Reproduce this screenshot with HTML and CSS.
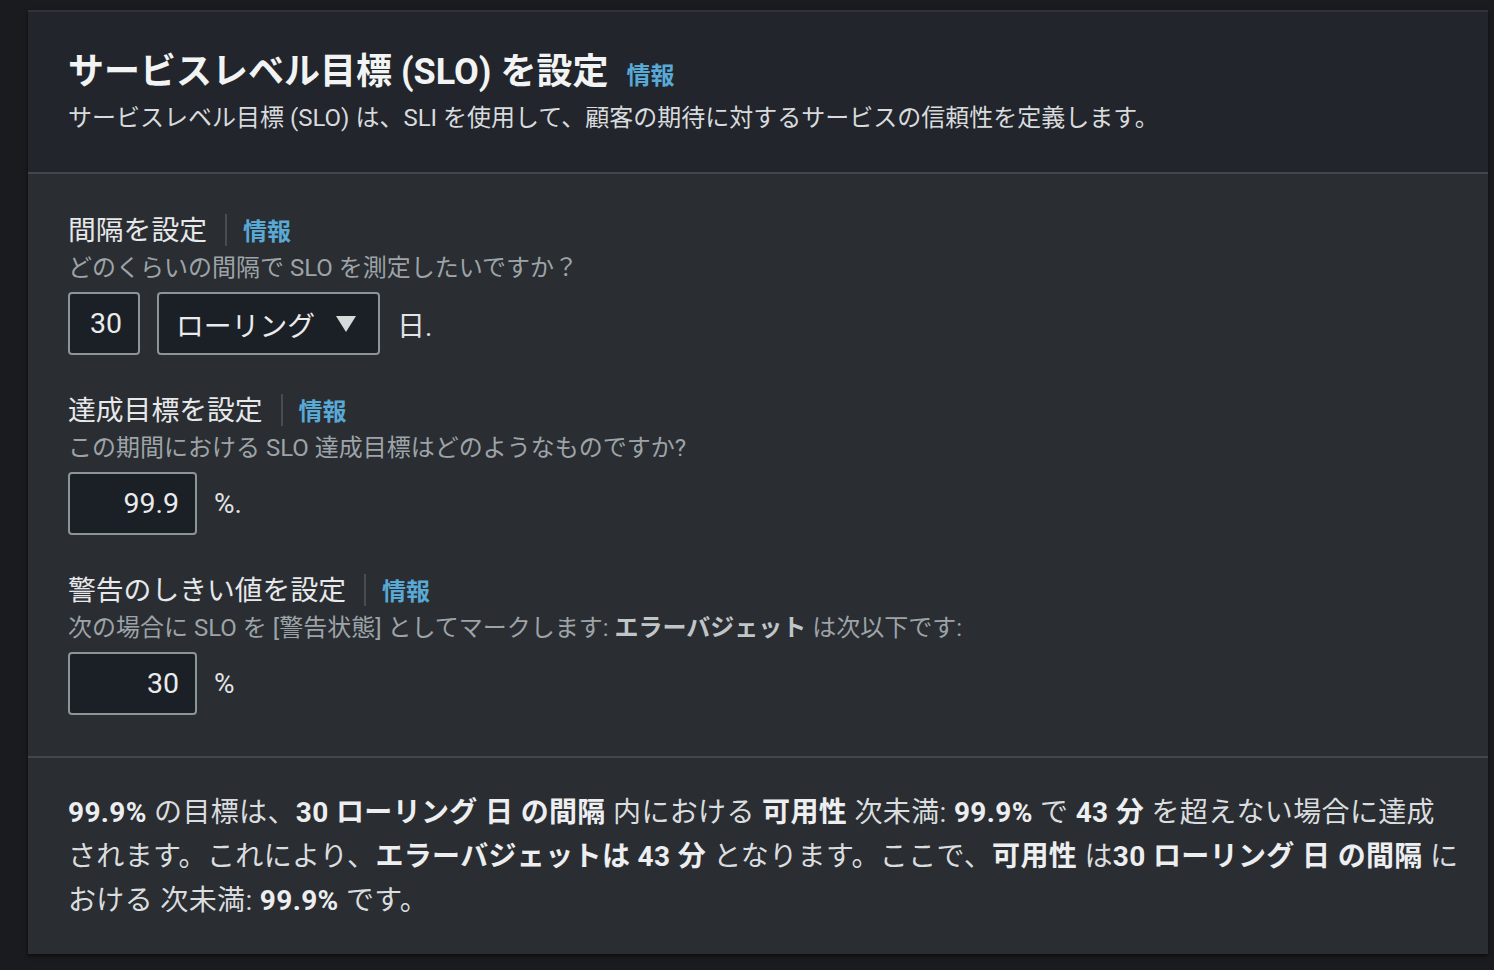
FILE: index.html
```html
<!DOCTYPE html>
<html lang="ja">
<head>
<meta charset="utf-8">
<link rel="stylesheet" href="styles.css">
</head>
<body>
<div class="card">
  <header class="card-header">
    <h1 class="title">サービスレベル目標 (SLO) を設定 <a class="info info-title">情報</a></h1>
    <p class="subtitle">サービスレベル目標 (SLO) は、SLI を使用して、顧客の期待に対するサービスの信頼性を定義します。</p>
  </header>
  <section class="card-body">
    <div class="field">
      <div class="label-row"><span class="label">間隔を設定</span><span class="sep"></span><a class="info">情報</a></div>
      <div class="desc">どのくらいの間隔で SLO を測定したいですか？</div>
      <div class="controls">
        <div class="input w-small">30</div>
        <div class="select"><span>ローリング</span><svg class="caret" width="20" height="16" viewBox="0 0 20 16"><path d="M0 0 H20 L10 16 Z" fill="#d5dbdb"/></svg></div>
        <span class="unit">日.</span>
      </div>
    </div>
    <div class="field">
      <div class="label-row"><span class="label">達成目標を設定</span><span class="sep"></span><a class="info">情報</a></div>
      <div class="desc">この期間における SLO 達成目標はどのようなものですか?</div>
      <div class="controls">
        <div class="input w-med">99.9</div>
        <span class="unit">%.</span>
      </div>
    </div>
    <div class="field">
      <div class="label-row"><span class="label">警告のしきい値を設定</span><span class="sep"></span><a class="info">情報</a></div>
      <div class="desc">次の場合に SLO を [警告状態] としてマークします: <b>エラーバジェット</b> は次以下です:</div>
      <div class="controls">
        <div class="input w-med">30</div>
        <span class="unit">%</span>
      </div>
    </div>
  </section>
  <footer class="card-footer">
    <p class="summary"><b>99.9%</b> の目標は、<b>30 ローリング 日 の間隔</b> 内における <b>可用性</b> 次未満: <b>99.9%</b> で <b>43 分</b> を超えない場合に達成されます。これにより、<b>エラーバジェットは 43 分</b> となります。ここで、<b>可用性</b> は<b>30 ローリング 日 の間隔</b> における 次未満: <b>99.9%</b> です。</p>
  </footer>
</div>
</body>
</html>
```
FILE: styles.css
```css
html, body {
  margin: 0;
  background: #1a1b1f;
}
body {
  padding: 10px 0 0 28px;
  height: 960px;
  overflow: hidden;
  font-family: "Roboto", "Noto Sans CJK JP", sans-serif;
}
.card {
  width: 1460px;
  background: #2a2d32;
  border-top: 2px solid #2f3238;
  box-shadow: 0 2px 4px rgba(0,0,0,0.6);
}
.card-header {
  background: #22252c;
  padding: 38px 40px 38px;
  border-bottom: 2px solid #43464e;
}
.title {
  margin: 0;
  font-size: 36px;
  line-height: 44px;
  font-weight: 700;
  color: #f2f3f3;
}
.info {
  color: #59a9d6;
  font-weight: 700;
  font-size: 24px;
  letter-spacing: 0;
}
.info-title {
  margin-left: 9px;
}
.subtitle {
  margin: 4px 0 0;
  font-size: 24px;
  line-height: 32px;
  color: #d8dbdd;
}
.card-body {
  padding: 38px 40px 41px;
  display: flex;
  flex-direction: column;
  gap: 37px;
  border-bottom: 2px solid #43464e;
}
.label-row {
  display: flex;
  align-items: baseline;
  height: 36px;
}
.label {
  font-size: 27.8px;
  line-height: 36px;
  color: #e6e8e9;
}
.sep {
  align-self: center;
  width: 2px;
  height: 32px;
  background: #484c53;
  margin: 0 16px 0 18px;
}
.desc {
  margin-top: 5px;
  font-size: 24px;
  line-height: 30px;
  color: #9da4a8;
}
.desc b {
  color: #c0c5c8;
}
.controls {
  margin-top: 9px;
  display: flex;
  align-items: center;
  gap: 17px;
}
.input, .select {
  box-sizing: border-box;
  height: 63px;
  background: #1b1f26;
  border: 2px solid #8b9597;
  border-radius: 4px;
  color: #e9ebed;
  font-size: 28.5px;
  display: flex;
  align-items: center;
}
.input {
  justify-content: flex-end;
  padding-right: 16px;
}
.w-small { width: 72px; }
.w-med { width: 129px; }
.select {
  width: 223px;
  padding: 0 22px 0 17px;
  justify-content: space-between;
  font-size: 27.8px;
}
.caret { display: block; }
.unit {
  font-size: 28px;
  color: #e2e4e5;
}
.card-footer {
  padding: 33px 40px 31px;
}
.summary {
  margin: 0 -11px 0 0;
  font-size: 28px;
  line-height: 44px;
  letter-spacing: 0.35px;
  color: #dadddf;
}
.summary b {
  color: #eceeef;
}
```
